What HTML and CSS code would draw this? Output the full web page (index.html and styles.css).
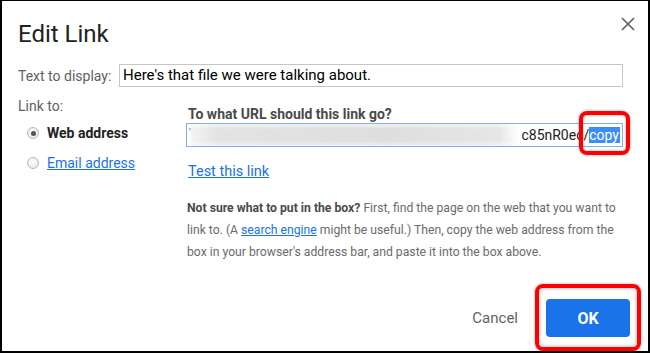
FILE: index.html
```html
<!DOCTYPE html>
<html lang="en">
<head>
<meta charset="utf-8">
<title>Edit Link</title>
<link rel="stylesheet" href="styles.css">
</head>
<body>
<div class="dialog">
  <header class="head">
    <h1 class="title">Edit Link</h1>
    <button class="close" aria-label="Close">
      <svg width="14" height="14" viewBox="0 0 14 14"><path d="M1 1L13 13M13 1L1 13" stroke="#5f6368" stroke-width="1.7" fill="none"/></svg>
    </button>
  </header>

  <div class="display-row">
    <span class="display-label">Text to display:</span>
    <div class="text-field">Here's that file we were talking about.</div>
  </div>

  <div class="main">
    <div class="link-to">
      <div class="link-to-label">Link to:</div>
      <div class="radio-row">
        <span class="radio checked"></span>
        <span class="radio-text">Web address</span>
      </div>
      <div class="radio-row">
        <span class="radio"></span>
        <a class="radio-link" href="#">Email address</a>
      </div>
    </div>

    <div class="url-pane">
      <div class="url-q">To what URL should this link go?</div>
      <div class="url-field">
        <span class="tick">'</span>
        <span class="blur"></span>
        <span class="url-tail">c85nR0ec/</span><span class="sel">copy</span>
      </div>
      <a class="test-link" href="#">Test this link</a>
      <p class="help"><b>Not sure what to put in the box?</b> First, find the page on the web that you want to link to. (A <a href="#">search engine</a> might be useful.) Then, copy the web address from the box in your browser's address bar, and paste it into the box above.</p>
    </div>
  </div>

  <footer class="foot">
    <button class="cancel">Cancel</button>
    <span class="ok-wrap"><button class="ok">OK</button></span>
  </footer>
</div>
</body>
</html>
```

FILE: styles.css
```css
* { box-sizing: border-box; }
html, body { margin: 0; padding: 0; background: #fff; }

.dialog {
  width: 650px;
  height: 353px;
  border: 2px solid #000;
  border-top-width: 1px;
  background: #fff;
  padding: 19px 25px 14px 16px;
  display: flex;
  flex-direction: column;
  font-family: Roboto, "Liberation Sans", sans-serif;
  color: #202124;
}

.head {
  display: flex;
  justify-content: space-between;
  align-items: flex-start;
}
.title {
  margin: 0;
  font-size: 24px;
  line-height: 28px;
  font-weight: 400;
  color: #202124;
}
.close {
  margin: -8px -17px 0 0;
  width: 24px;
  height: 24px;
  padding: 0;
  border: 0;
  background: none;
  display: flex;
  align-items: center;
  justify-content: center;
}

.display-row {
  display: flex;
  align-items: center;
  margin-top: 16px;
}
.display-label {
  width: 101px;
  font-size: 14px;
  color: #616161;
}
.text-field {
  flex: 1;
  height: 23px;
  border: 1px solid #c6c6c6;
  padding: 0 3px;
  font-size: 15px;
  line-height: 21px;
  color: #000;
}

.main {
  display: flex;
}
.link-to {
  width: 168px;
  padding-top: 9px;
}
.link-to-label {
  font-size: 14px;
  line-height: 20px;
  color: #616161;
}
.radio-row {
  display: flex;
  align-items: center;
  height: 30px;
  padding-left: 9px;
  gap: 8px;
}
.link-to-label + .radio-row { margin-top: 2px; }
.radio {
  width: 12px;
  height: 12px;
  border-radius: 50%;
  border: 1px solid #b9b9b9;
  background: radial-gradient(circle at 50% 40%, #fdfdfd, #e4e4e4);
  position: relative;
}
.radio.checked::after {
  content: "";
  position: absolute;
  left: 2.5px;
  top: 2.5px;
  width: 5px;
  height: 5px;
  border-radius: 50%;
  background: #555;
}
.radio-text {
  font-size: 14px;
  font-weight: 700;
  color: #222;
}
.radio-link {
  font-size: 14px;
  color: #1a73e8;
  text-decoration: underline;
}

.url-pane {
  flex: 1;
  padding-top: 18px;
}
.url-q {
  padding-left: 2px;
  font-size: 14px;
  line-height: 18px;
  font-weight: 700;
  color: #4a4a4a;
}
.url-field {
  height: 24px;
  border: 1px solid #84aef2;
  display: flex;
  align-items: center;
  padding: 0 2px 0 2px;
  font-size: 14px;
  color: #222;
}
.tick {
  font-size: 10px;
  line-height: 10px;
  align-self: flex-start;
  margin-top: 4px;
  color: #555;
}
.blur {
  flex: 1;
  align-self: stretch;
  background:
    linear-gradient(to bottom, rgba(255,255,255,.55), rgba(255,255,255,0) 25%, rgba(255,255,255,0) 75%, rgba(255,255,255,.55)),
    linear-gradient(to right, #f4f4f4, #e3e3e3 8%, #dedede 60%, #e6e6e6 94%, #fff);
}
.url-tail { margin-left: 2px; }
.sel {
  position: relative;
  background: #3a8ef6;
  color: #fff;
  line-height: 16px;
  padding-right: 1px;
}
.sel::after {
  content: "";
  position: absolute;
  left: -10px;
  right: -10px;
  top: -16px;
  bottom: -12px;
  border: 4px solid #f00;
  border-radius: 8px;
  box-shadow: 0 0 3px rgba(0,0,0,.35), inset 0 0 3px rgba(0,0,0,.35);
}

.test-link {
  display: block;
  width: max-content;
  margin-top: 15px;
  margin-left: 2px;
  font-size: 14.5px;
  line-height: 20px;
  color: #1a73e8;
  text-decoration: underline;
}
.help {
  margin: 15px 0 0 1px;
  font-size: 12.2px;
  line-height: 22px;
  color: #6b6b6b;
}
.help b { color: #4a4a4a; }
.help a { color: #1a73e8; text-decoration: underline; }

.foot {
  margin-top: auto;
  display: flex;
  justify-content: flex-end;
  align-items: center;
  margin-right: -7px;
}
.cancel {
  border: 0;
  background: none;
  font-family: inherit;
  font-size: 15px;
  color: #5f6368;
  padding: 9px 14px;
  margin-right: 14px;
}
.ok-wrap { position: relative; display: flex; }
.ok-wrap::after {
  content: "";
  position: absolute;
  left: -11px;
  right: -11px;
  top: -15px;
  bottom: -14px;
  border: 4px solid #f00;
  border-radius: 8px;
  box-shadow: 0 0 3px rgba(0,0,0,.35), inset 0 0 4px rgba(0,0,0,.35);
}
.ok {
  width: 84px;
  height: 38px;
  border: 0;
  border-radius: 4px;
  background: #1a73e8;
  color: #fff;
  font-family: inherit;
  font-size: 16px;
  font-weight: 700;
}
```
